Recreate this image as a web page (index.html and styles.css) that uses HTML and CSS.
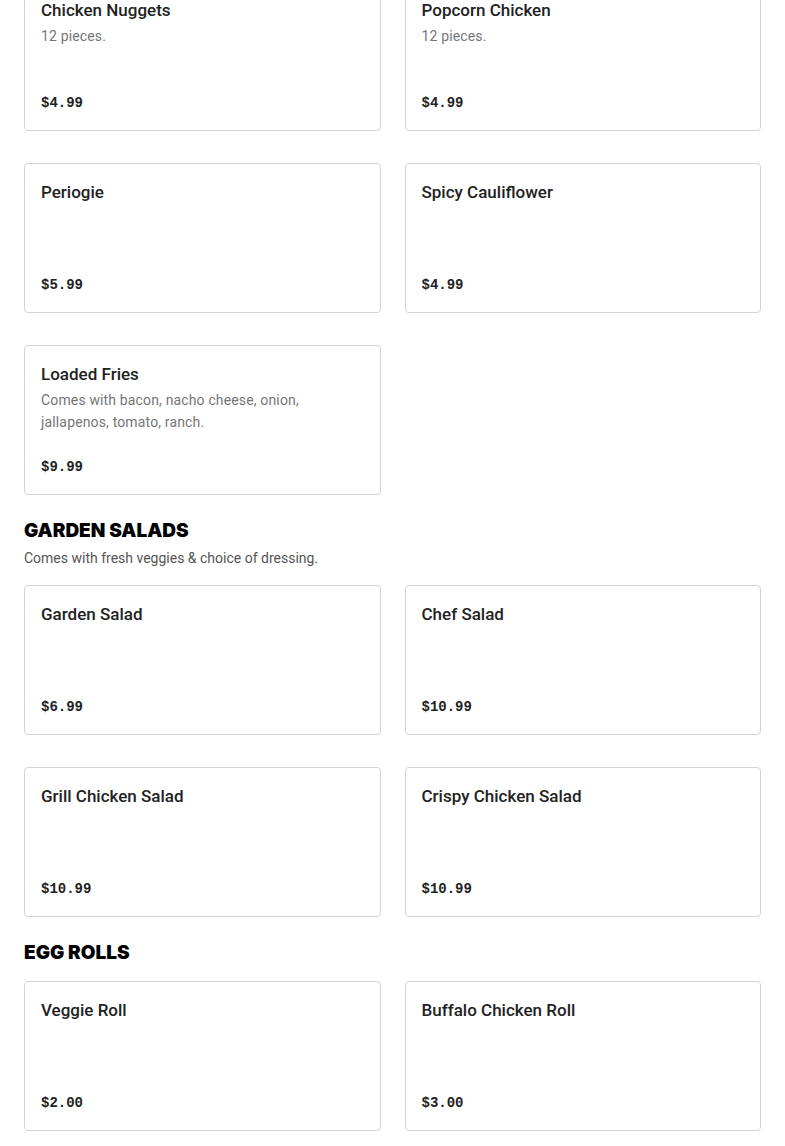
FILE: index.html
```html
<!DOCTYPE html>
<html lang="en">
<head>
<meta charset="utf-8">
<title>Menu</title>
<link rel="stylesheet" href="styles.css">
</head>
<body>
<main class="menu">
  <section class="section">
    <div class="grid">
      <div class="card"><div class="name">Chicken Nuggets</div><div class="desc">12 pieces.</div><div class="price">$4.99</div></div>
      <div class="card"><div class="name">Popcorn Chicken</div><div class="desc">12 pieces.</div><div class="price">$4.99</div></div>
      <div class="card"><div class="name">Periogie</div><div class="price">$5.99</div></div>
      <div class="card"><div class="name">Spicy Cauliflower</div><div class="price">$4.99</div></div>
      <div class="card"><div class="name">Loaded Fries</div><div class="desc">Comes with bacon, nacho cheese, onion, jallapenos, tomato, ranch.</div><div class="price">$9.99</div></div>
    </div>
  </section>
  <section class="section">
    <h2 class="heading">Garden Salads</h2>
    <p class="section-desc">Comes with fresh veggies &amp; choice of dressing.</p>
    <div class="grid">
      <div class="card"><div class="name">Garden Salad</div><div class="price">$6.99</div></div>
      <div class="card"><div class="name">Chef Salad</div><div class="price">$10.99</div></div>
      <div class="card"><div class="name">Grill Chicken Salad</div><div class="price">$10.99</div></div>
      <div class="card"><div class="name">Crispy Chicken Salad</div><div class="price">$10.99</div></div>
    </div>
  </section>
  <section class="section">
    <h2 class="heading">Egg Rolls</h2>
    <div class="grid">
      <div class="card"><div class="name">Veggie Roll</div><div class="price">$2.00</div></div>
      <div class="card"><div class="name">Buffalo Chicken Roll</div><div class="price">$3.00</div></div>
    </div>
  </section>
</main>
</body>
</html>
```

FILE: styles.css
```css
html, body {
  margin: 0;
  padding: 0;
  background: #ffffff;
}
body {
  font-family: Roboto, "Liberation Sans", sans-serif;
  color: #222222;
}
.menu {
  margin-top: -19px;
  padding: 0 24px;
}
.section {
  margin-bottom: 24px;
}
.heading {
  margin: 0 0 16px;
  font-family: Inter, "Liberation Sans", sans-serif;
  font-weight: 900;
  font-size: 19px;
  line-height: 24px;
  text-transform: uppercase;
  letter-spacing: 0;
  color: #000000;
}
.heading + .section-desc {
  margin-top: -12px;
}
.section-desc {
  margin: 0 0 16px;
  font-size: 14px;
  line-height: 22px;
  color: #555555;
}
.grid {
  display: grid;
  grid-template-columns: 1fr 1fr;
  column-gap: 24px;
  row-gap: 32px;
}
.card {
  box-sizing: border-box;
  min-height: 150px;
  border: 1px solid #d4d4d4;
  border-radius: 4px;
  padding: 16px;
  display: flex;
  flex-direction: column;
}
.name {
  font-size: 17px;
  line-height: 24px;
  font-weight: 500;
  color: #222222;
}
.desc {
  margin-top: 3px;
  font-size: 14px;
  line-height: 22px;
  letter-spacing: 0.15px;
  color: #767676;
}
.price {
  margin-top: auto;
  padding-top: 16px;
  font-family: "Liberation Mono", monospace;
  font-weight: 700;
  font-size: 14px;
  line-height: 22px;
  color: #222222;
}
```
